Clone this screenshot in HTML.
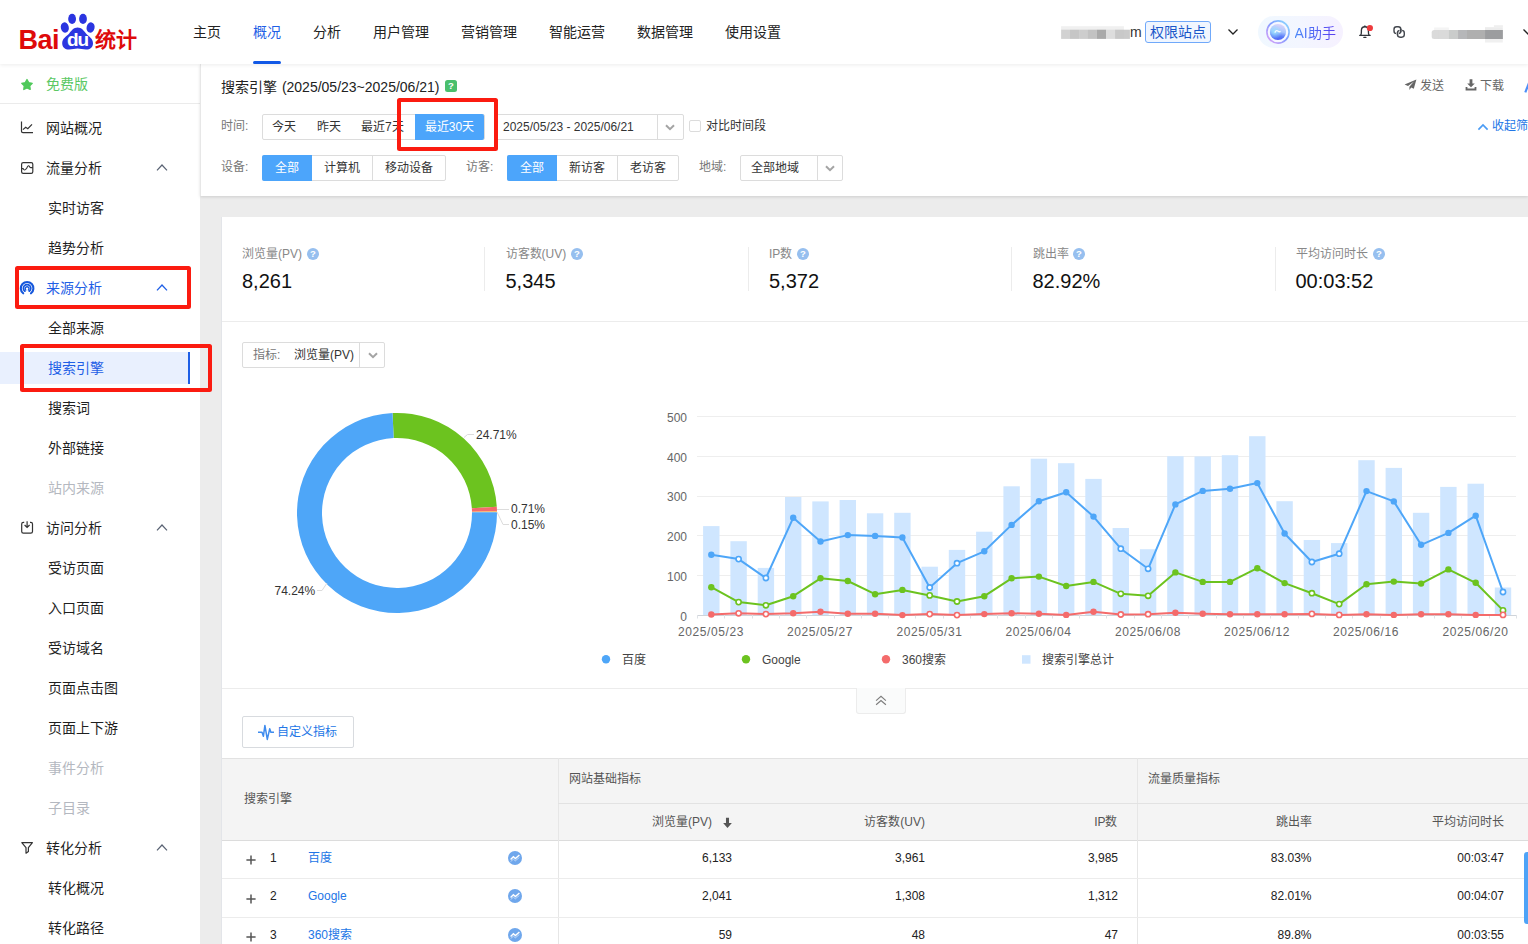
<!DOCTYPE html>
<html lang="zh-CN">
<head>
<meta charset="utf-8">
<title>百度统计 - 搜索引擎</title>
<style>
html,body{margin:0;padding:0}
body{width:1528px;height:944px;overflow:hidden;position:relative;background:#ececec;font-family:"Liberation Sans",sans-serif;color:#333;font-size:12px}
.a{position:absolute;white-space:nowrap}
.t{position:absolute;white-space:nowrap;height:20px;line-height:20px}
.r{text-align:right}
.c{text-align:center}
#hdr{left:0;top:0;width:1528px;height:64px;background:#fff;box-shadow:0 1px 4px rgba(0,0,0,.08);z-index:5}
.nav{font-size:14px;color:#222;top:22px}
#side{left:0;top:64px;width:200px;height:880px;background:#fff}
.m{font-size:14px;color:#1f1f1f;left:46px}
.s{font-size:14px;color:#1f1f1f;left:48px}
.dis{color:#b4b8c0}
#flt{left:200px;top:64px;width:1328px;height:132px;background:#fff;box-shadow:0 1px 3px rgba(0,0,0,.13),inset 1px 0 0 #e7e7e7}
.lab{color:#777;font-size:12px}
.grp{box-sizing:border-box;border:1px solid #dcdcdc;border-radius:2px;background:#fff;height:26px}
.sel{background:#4ca5fb;color:#fff;height:26px;line-height:26px;text-align:center;font-size:12px}
.opt{height:26px;line-height:26px;text-align:center;font-size:12px;color:#333}
#card{left:222px;top:217px;width:1306px;height:727px;background:#fff;box-shadow:-1px 0 0 #e3e5e9}
.sl{font-size:12px;color:#888;margin-top:.5px}
.sv{font-size:20px;color:#111;height:24px;line-height:24px}
.q{width:12px;height:12px;border-radius:6px;background:#96bfef;color:#fff;font-size:9.5px;font-weight:bold;line-height:12.5px;text-align:center}
.dv{width:1px;background:#ececec;top:247px;height:44px}
.ax{font-size:12px;color:#666}
.th{font-size:12px;color:#555}
.td{font-size:12px;color:#222}
.lk{font-size:12px;color:#2276e6}
.redbox{box-sizing:border-box;border:4px solid #fb1b10;border-radius:2.5px;z-index:9}
</style>
</head>
<body>
<!-- ================= HEADER ================= -->
<div id="hdr" class="a">
  <!-- logo -->
  <div class="a" style="left:18.5px;top:25px;height:30px;line-height:30px;font-size:27px;font-weight:bold;color:#de0a0a;letter-spacing:-0.5px">Bai</div>
  <svg class="a" style="left:58px;top:10px" width="40" height="44" viewBox="58 10 40 44">
    <g fill="#2b35e0">
      <ellipse cx="72.1" cy="18.9" rx="3.9" ry="5.1"/>
      <ellipse cx="83" cy="18.9" rx="3.9" ry="5.1"/>
      <ellipse cx="64.8" cy="27.5" rx="4.0" ry="5.2" transform="rotate(-12 64.8 27.5)"/>
      <ellipse cx="90.6" cy="27.5" rx="4.0" ry="5.2" transform="rotate(12 90.6 27.5)"/>
      <path d="M77.6 27.6 C81.5 27.6 83.6 30.6 85.8 33.2 C88.6 36.4 93.2 38.4 93 43.4 C92.8 47.6 89.6 49.6 86 49.4 C83 49.2 80.4 48.4 77.6 48.4 C74.8 48.4 72.2 49.2 69.2 49.4 C65.6 49.6 62.4 47.6 62.2 43.4 C62 38.4 66.6 36.4 69.4 33.2 C71.6 30.6 73.7 27.6 77.6 27.6 Z"/>
    </g>
  </svg>
  <div class="a" style="left:64px;top:29.5px;width:28px;height:20px;line-height:20px;font-size:19px;font-weight:bold;color:#fff;letter-spacing:-1px;text-align:center;text-indent:-1px">du</div>
  <div class="a" style="left:95px;top:26px;height:28px;line-height:28px;font-size:21px;font-weight:bold;color:#de0a0a;letter-spacing:0">统计</div>
  <!-- nav -->
  <div class="t nav" style="left:193px">主页</div>
  <div class="t nav" style="left:253px;color:#1f5fe6">概况</div>
  <div class="t nav" style="left:313px">分析</div>
  <div class="t nav" style="left:373px">用户管理</div>
  <div class="t nav" style="left:461px">营销管理</div>
  <div class="t nav" style="left:549px">智能运营</div>
  <div class="t nav" style="left:637px">数据管理</div>
  <div class="t nav" style="left:725px">使用设置</div>
  <div class="a" style="left:253px;top:60.8px;width:28px;height:3.2px;background:#1259e6;border-radius:1.6px"></div>
  <!-- right side -->
  <svg class="a" style="left:1055px;top:20px" width="80" height="24" viewBox="1055 20 80 24"><rect x="1061.1" y="26.2" width="62.8" height="3.9" fill="#f0f0f0"/><rect x="1061.13" y="29.7" width="8.82" height="9.2" fill="#d2d2d2"/><rect x="1069.90" y="29.7" width="9.21" height="9.2" fill="#c6c6c6"/><rect x="1079.06" y="29.7" width="8.95" height="9.2" fill="#cdcdcd"/><rect x="1087.96" y="29.7" width="8.95" height="9.2" fill="#c2c2c2"/><rect x="1096.86" y="29.7" width="9.21" height="9.2" fill="#a9a9a9"/><rect x="1106.02" y="29.7" width="9.08" height="9.2" fill="#dddddd"/><rect x="1115.05" y="29.7" width="8.95" height="9.2" fill="#c8c8c8"/><rect x="1123.95" y="29.7" width="5.94" height="9.2" fill="#cacaca"/></svg>
  <div class="t" style="left:1130px;top:22px;font-size:14px;color:#333">m</div>
  <div class="a" style="left:1145px;top:21px;width:66px;height:22px;box-sizing:border-box;border:1px solid #70a9fa;border-radius:3px;background:#f0f6ff;color:#1a57c9;font-size:14px;line-height:20px;text-align:center">权限站点</div>
  <svg class="a" style="left:1227px;top:27px" width="12" height="10" viewBox="0 0 12 10"><path d="M1.5 2.5 L6 7 L10.5 2.5" fill="none" stroke="#222" stroke-width="1.3"/></svg>
  <div class="a" style="left:1258px;top:16px;width:85px;height:32px;border-radius:16px;background:linear-gradient(90deg,#f0f8ff 0%,#f3f6ff 50%,#f6f1ff 100%)"></div>
  <svg class="a" style="left:1265px;top:19px" width="26" height="26" viewBox="0 0 26 26">
    <defs>
      <linearGradient id="g1" x1="1" y1="0" x2="0" y2="1"><stop offset="0" stop-color="#8fe2ff"/><stop offset=".45" stop-color="#7f9cff"/><stop offset="1" stop-color="#e3a3f7"/></linearGradient>
      <linearGradient id="g2" x1="0.6" y1="0" x2="0.4" y2="1"><stop offset="0" stop-color="#dcd5fb"/><stop offset=".45" stop-color="#a9c6fd"/><stop offset=".72" stop-color="#5c7ef8"/><stop offset="1" stop-color="#4a5cf5"/></linearGradient>
      <radialGradient id="g3" cx=".28" cy=".5" r=".45"><stop offset="0" stop-color="#9be2ff" stop-opacity=".95"/><stop offset="1" stop-color="#9be2ff" stop-opacity="0"/></radialGradient>
      <filter id="bl" x="-20%" y="-20%" width="140%" height="140%"><feGaussianBlur stdDeviation=".55"/></filter>
    </defs>
    <circle cx="13" cy="13" r="11.1" fill="#f6f8ff" stroke="url(#g1)" stroke-width="1.6"/>
    <g filter="url(#bl)"><circle cx="13" cy="13" r="8.1" fill="url(#g2)"/><circle cx="13" cy="13" r="8.1" fill="url(#g3)"/>
    <path d="M9.8 13.6 Q11.4 10.4 13.2 12.2 Q14.2 13.2 15.6 12.4" fill="none" stroke="#fff" stroke-width="1.3" opacity=".85"/></g>
  </svg>
  <div class="t" style="left:1294.5px;top:22.7px;font-size:14px;background:linear-gradient(90deg,#4a88f8,#5b40f0);-webkit-background-clip:text;background-clip:text;color:transparent;-webkit-text-fill-color:transparent">AI助手</div>
  <div class="t" style="left:1294.5px;top:22px;font-size:14px;color:#5a6ef0;opacity:0">AI助手</div>
  <!-- bell -->
  <svg class="a" style="left:1357px;top:24px" width="18" height="16" viewBox="1357 24 18 16">
    <g fill="none" stroke="#30343a" stroke-width="1.35" stroke-linecap="round" stroke-linejoin="round">
    <path d="M1359.7 35.3 H1370.2"/>
    <path d="M1360.7 35.1 C1361.7 33.6 1361.3 31.6 1361.4 30.2 C1361.5 28 1362.9 26.7 1364.9 26.7 C1366.9 26.7 1368.3 28 1368.4 30.2 C1368.5 31.6 1368.1 33.6 1369.1 35.1"/>
    <path d="M1364.9 25.9 V26.6"/>
    <path d="M1363.9 37.4 H1365.9"/>
    </g>
    <circle cx="1369.9" cy="28" r="3.1" fill="#ee3a3c"/>
  </svg>
  <!-- link -->
  <svg class="a" style="left:1392px;top:25px" width="14" height="14" viewBox="1392 25 14 14">
    <g fill="none" stroke="#43474e" stroke-width="1.4" stroke-linecap="round">
    <rect x="1397.5" y="30.4" width="6.8" height="6.8" rx="2.6"/>
    <path d="M1400.8 29.4 V31.6" stroke="#fff" stroke-width="2.6" stroke-linecap="butt"/>
    <rect x="1394" y="26.8" width="6.8" height="6.8" rx="2.6"/>
    <path d="M1397.5 32.6 V34.6" stroke="#fff" stroke-width="2.6" stroke-linecap="butt"/>
    <path d="M1397.5 32.4 V34.8"/>
    <path d="M1400.8 29.2 V31.8"/>
    </g>
  </svg>
  <svg class="a" style="left:1428px;top:20px" width="80" height="26" viewBox="1428 20 80 26"><rect x="1434.1" y="27.5" width="14.8" height="2.7" fill="#f4f4f4"/><rect x="1485.0" y="27.2" width="17.8" height="3.0" fill="#ececec"/><rect x="1493.9" y="25.2" width="9.0" height="2.1" fill="#efefef"/><rect x="1485.0" y="38.8" width="17.8" height="3.7" fill="#f0f0f0"/><rect x="1431.7" y="30.0" width="17.5" height="9.0" rx="2.5" fill="#dadada"/><rect x="1438.4" y="30.0" width="10.7" height="9.0" fill="#dadada"/><rect x="1448.98" y="30.0" width="9.10" height="9.0" fill="#cacccb"/><rect x="1458.03" y="30.0" width="9.03" height="9.0" fill="#b6b7b9"/><rect x="1467.00" y="30.0" width="18.07" height="9.0" fill="#afafaf"/><rect x="1485.03" y="30.0" width="17.86" height="9.0" fill="#9c9d9f"/></svg>
  <svg class="a" style="left:1522px;top:27px" width="12" height="10" viewBox="0 0 12 10"><path d="M1.5 2.5 L6 7 L10.5 2.5" fill="none" stroke="#222" stroke-width="1.3"/></svg>
</div>

<!-- ================= SIDEBAR ================= -->
<div id="side" class="a"></div>
<svg class="a" style="left:19.9px;top:77.6px" width="14" height="14" viewBox="0 0 14 14"><path d="M7.00 1.50 L8.70 4.65 L12.23 5.30 L9.76 7.90 L10.23 11.45 L7.00 9.90 L3.77 11.45 L4.24 7.90 L1.77 5.30 L5.30 4.65 Z" fill="#50c95b" stroke="#50c95b" stroke-width="1.3" stroke-linejoin="round"/></svg>
<div class="t m" style="top:74px;color:#5bc864">免费版</div>
<div class="a" style="left:0;top:103px;width:200px;height:1px;background:#ebebeb"></div>

<svg class="a" style="left:20px;top:120px" width="15" height="15" viewBox="20 120 15 15"><path d="M21.5 121.4 L21.5 131.2 Q21.5 132.6 22.9 132.6 L33 132.6" fill="none" stroke="#333" stroke-width="1.2"/><path d="M22.9 129.6 L25.7 127.3 L27.8 128.7 L32 124.3" fill="none" stroke="#333" stroke-width="1.2"/></svg>
<div class="t m" style="top:118px">网站概况</div>

<svg class="a" style="left:20px;top:161px" width="15" height="15" viewBox="20 161 15 15"><rect x="21.6" y="162.6" width="11.2" height="10.8" rx="1.6" fill="none" stroke="#333" stroke-width="1.2"/><path d="M21.6 168.6 L23.2 168.6 Q24 170.6 25.4 169.6 Q27 168.2 27.4 166.8 Q28.4 165 29.4 166.4 Q30 167.6 31 167.6 L32.8 167.6" fill="none" stroke="#333" stroke-width="1.1"/></svg>
<div class="t m" style="top:158px">流量分析</div>
<svg class="a" style="left:156px;top:163px" width="12" height="9" viewBox="0 0 12 9"><path d="M1 7.4 L6 2 L11 7.4" fill="none" stroke="#596273" stroke-width="1.2"/></svg>
<div class="t s" style="top:198px">实时访客</div>
<div class="t s" style="top:238px">趋势分析</div>

<svg class="a" style="left:19px;top:280px" width="16" height="16" viewBox="19 280 16 16"><g fill="none" stroke="#1557dc" stroke-linecap="round"><path d="M23.2 293.3 A6.3 6.3 0 1 1 31 293.3" stroke-width="2.1"/><path d="M24.9 291.2 A3.7 3.7 0 1 1 29.3 291.2" stroke-width="1.7"/><path d="M25.8 290 A1.9 1.9 0 1 1 28.4 290" stroke-width="1.4"/></g></svg>
<div class="t m" style="top:278px;color:#1f5fe6">来源分析</div>
<svg class="a" style="left:156px;top:283px" width="12" height="9" viewBox="0 0 12 9"><path d="M1 7.4 L6 2 L11 7.4" fill="none" stroke="#1f5fe6" stroke-width="1.3"/></svg>
<div class="t s" style="top:318px">全部来源</div>
<div class="a" style="left:0;top:352px;width:188px;height:32px;background:#e9f0fe"></div>
<div class="a" style="left:188px;top:352px;width:2px;height:32px;background:#1f5fe6"></div>
<div class="t s" style="top:358px;color:#1f5fe6">搜索引擎</div>
<div class="t s" style="top:398px">搜索词</div>
<div class="t s" style="top:438px">外部链接</div>
<div class="t s dis" style="top:478px">站内来源</div>

<svg class="a" style="left:20px;top:520px" width="15" height="15" viewBox="20 520 15 15"><path d="M24.2 522.3 L23.4 522.3 Q21.7 522.3 21.7 524 L21.7 531.4 Q21.7 533.1 23.4 533.1 L30.8 533.1 Q32.5 533.1 32.5 531.4 L32.5 524 Q32.5 522.3 30.8 522.3 L30 522.3" fill="none" stroke="#333" stroke-width="1.2"/><path d="M27.1 521.2 L27.1 527 M24.6 525 L27.1 527.4 L29.6 525" fill="none" stroke="#333" stroke-width="1.2"/></svg>
<div class="t m" style="top:518px">访问分析</div>
<svg class="a" style="left:156px;top:523px" width="12" height="9" viewBox="0 0 12 9"><path d="M1 7.4 L6 2 L11 7.4" fill="none" stroke="#596273" stroke-width="1.2"/></svg>
<div class="t s" style="top:558px">受访页面</div>
<div class="t s" style="top:598px">入口页面</div>
<div class="t s" style="top:638px">受访域名</div>
<div class="t s" style="top:678px">页面点击图</div>
<div class="t s" style="top:718px">页面上下游</div>
<div class="t s dis" style="top:758px">事件分析</div>
<div class="t s dis" style="top:798px">子目录</div>

<svg class="a" style="left:20px;top:841px" width="15" height="15" viewBox="20 841 15 15"><path d="M21.8 842.6 L32.4 842.6 L28.4 847.6 L28.4 851.4 L26 853.2 L26 847.6 Z" fill="none" stroke="#333" stroke-width="1.2" stroke-linejoin="round"/></svg>
<div class="t m" style="top:838px">转化分析</div>
<svg class="a" style="left:156px;top:843px" width="12" height="9" viewBox="0 0 12 9"><path d="M1 7.4 L6 2 L11 7.4" fill="none" stroke="#596273" stroke-width="1.2"/></svg>
<div class="t s" style="top:878px">转化概况</div>
<div class="t s" style="top:918px">转化路径</div>

<!-- red annotation boxes -->
<div class="a redbox" style="left:15px;top:266px;width:176px;height:43px"></div>
<div class="a redbox" style="left:20px;top:344px;width:192px;height:48px"></div>
<div class="a redbox" style="left:397px;top:98px;width:101px;height:53px"></div>
<!-- ================= FILTER PANEL ================= -->
<div id="flt" class="a"></div>
<div class="t" style="left:221px;top:76.5px;font-size:14px;color:#222;word-spacing:1px">搜索引擎 (2025/05/23~2025/06/21)</div>
<div class="a" style="left:445px;top:80px;width:12px;height:12px;border-radius:2.5px;background:#4abf6d;color:#fff;font-size:9.5px;font-weight:bold;line-height:12.5px;text-align:center">?</div>

<svg class="a" style="left:1404px;top:79px" width="13" height="12" viewBox="0 0 13 12"><path d="M12.4 0.4 L0.6 5.6 L4 7 L10 2.6 L5.4 7.8 L5.4 11 L7.2 8.6 L9.8 9.8 Z" fill="#666"/></svg>
<div class="t" style="left:1420px;top:76px;color:#666">发送</div>
<svg class="a" style="left:1465px;top:79px" width="12" height="12" viewBox="0 0 12 12"><path d="M4.6 0.2 H7.4 V4.4 H9.8 L6 8.2 L2.2 4.4 H4.6 Z" fill="#666"/><path d="M0.6 8 V11.6 H11.4 V8 H9.6 V9.4 H2.4 V8 Z" fill="#666"/></svg>
<div class="t" style="left:1480px;top:76px;color:#666">下载</div>
<svg class="a" style="left:1520px;top:78px" width="10" height="18" viewBox="1520 78 10 18"><path d="M1525.3 92.4 L1529.4 82" fill="none" stroke="#4d8ff8" stroke-width="2.2"/></svg>

<div class="t lab" style="left:221px;top:116px">时间:</div>
<div class="a grp" style="left:262px;top:114px;width:223px"></div>
<div class="a opt" style="left:272px;top:114px">今天</div>
<div class="a opt" style="left:317px;top:114px">昨天</div>
<div class="a opt" style="left:361px;top:114px">最近7天</div>
<div class="a sel" style="left:415px;top:114px;width:69px;border-radius:0 2px 2px 0">最近30天</div>
<div class="a grp" style="left:495px;top:114px;width:189px"></div>
<div class="a opt" style="left:503px;top:114px">2025/05/23 - 2025/06/21</div>
<div class="a" style="left:657px;top:114px;width:1px;height:26px;background:#dcdcdc"></div>
<svg class="a" style="left:664px;top:123px" width="12" height="9" viewBox="0 0 12 9"><path d="M2 2.2 L6 6.2 L10 2.2" fill="none" stroke="#a4a4a4" stroke-width="2"/></svg>
<div class="a" style="left:689px;top:120px;width:12px;height:12px;box-sizing:border-box;border:1px solid #dcdcdc;border-radius:2px;background:#fff"></div>
<div class="t" style="left:706px;top:116px;color:#333">对比时间段</div>
<svg class="a" style="left:1477px;top:123px" width="12" height="8" viewBox="0 0 12 8"><path d="M1.4 6.6 L6 2 L10.6 6.6" fill="none" stroke="#4b9cf5" stroke-width="1.7"/></svg>
<div class="t" style="left:1492px;top:116px;color:#2276e6">收起筛选</div>

<div class="t lab" style="left:221px;top:157px">设备:</div>
<div class="a grp" style="left:262px;top:155px;width:184px"></div>
<div class="a sel" style="left:262px;top:155px;width:50px;border-radius:2px 0 0 2px">全部</div>
<div class="a opt" style="left:312px;top:155px;width:60px">计算机</div>
<div class="a" style="left:372px;top:155px;width:1px;height:26px;background:#dcdcdc"></div>
<div class="a opt" style="left:373px;top:155px;width:72px">移动设备</div>
<div class="t lab" style="left:466px;top:157px">访客:</div>
<div class="a grp" style="left:507px;top:155px;width:172px"></div>
<div class="a sel" style="left:507px;top:155px;width:50px;border-radius:2px 0 0 2px">全部</div>
<div class="a opt" style="left:557px;top:155px;width:60px">新访客</div>
<div class="a" style="left:617px;top:155px;width:1px;height:26px;background:#dcdcdc"></div>
<div class="a opt" style="left:618px;top:155px;width:60px">老访客</div>
<div class="t lab" style="left:699px;top:157px">地域:</div>
<div class="a grp" style="left:740px;top:155px;width:103px"></div>
<div class="a opt" style="left:751px;top:155px">全部地域</div>
<div class="a" style="left:817px;top:155px;width:1px;height:26px;background:#dcdcdc"></div>
<svg class="a" style="left:824px;top:164px" width="12" height="9" viewBox="0 0 12 9"><path d="M2 2.2 L6 6.2 L10 2.2" fill="none" stroke="#a4a4a4" stroke-width="2"/></svg>

<!-- ================= MAIN CARD ================= -->
<div id="card" class="a"></div>
<div class="t sl" style="left:242px;top:243px">浏览量(PV)</div><div class="a q" style="left:307px;top:248px">?</div>
<div class="t sv" style="left:242px;top:269px">8,261</div>
<div class="a dv" style="left:484px"></div>
<div class="t sl" style="left:505.5px;top:243px">访客数(UV)</div><div class="a q" style="left:571px;top:248px">?</div>
<div class="t sv" style="left:505.5px;top:269px">5,345</div>
<div class="a dv" style="left:748px"></div>
<div class="t sl" style="left:769px;top:243px">IP数</div><div class="a q" style="left:797px;top:248px">?</div>
<div class="t sv" style="left:769px;top:269px">5,372</div>
<div class="a dv" style="left:1011px"></div>
<div class="t sl" style="left:1032.5px;top:243px">跳出率</div><div class="a q" style="left:1073px;top:248px">?</div>
<div class="t sv" style="left:1032.5px;top:269px">82.92%</div>
<div class="a dv" style="left:1275px"></div>
<div class="t sl" style="left:1295.5px;top:243px">平均访问时长</div><div class="a q" style="left:1373px;top:248px">?</div>
<div class="t sv" style="left:1295.5px;top:269px">00:03:52</div>
<div class="a" style="left:222px;top:321px;width:1306px;height:1px;background:#ececec"></div>

<div class="a grp" style="left:242px;top:342px;width:143px"></div>
<div class="a opt" style="left:253px;top:342px;color:#777">指标:</div>
<div class="a opt" style="left:294px;top:342px">浏览量(PV)</div>
<div class="a" style="left:359px;top:342px;width:1px;height:26px;background:#dcdcdc"></div>
<svg class="a" style="left:366.5px;top:351px" width="12" height="9" viewBox="0 0 12 9"><path d="M2 2.2 L6 6.2 L10 2.2" fill="none" stroke="#a4a4a4" stroke-width="2"/></svg>

<!-- chart texts -->
<div class="t" style="left:476px;top:424.5px;color:#333">24.71%</div>
<div class="t" style="left:511px;top:498.5px;color:#333">0.71%</div>
<div class="t" style="left:511px;top:514.5px;color:#333">0.15%</div>
<div class="t" style="left:274.5px;top:580.5px;color:#333">74.24%</div>

<div class="t ax r" style="left:647px;width:40px;top:407.5px">500</div>
<div class="t ax r" style="left:647px;width:40px;top:447.5px">400</div>
<div class="t ax r" style="left:647px;width:40px;top:487px">300</div>
<div class="t ax r" style="left:647px;width:40px;top:527px">200</div>
<div class="t ax r" style="left:647px;width:40px;top:566.5px">100</div>
<div class="t ax r" style="left:647px;width:40px;top:606.5px">0</div>
<div class="t ax c" style="left:661px;width:100px;top:621.8px;letter-spacing:.6px">2025/05/23</div>
<div class="t ax c" style="left:770px;width:100px;top:621.8px;letter-spacing:.6px">2025/05/27</div>
<div class="t ax c" style="left:879.5px;width:100px;top:621.8px;letter-spacing:.6px">2025/05/31</div>
<div class="t ax c" style="left:988.5px;width:100px;top:621.8px;letter-spacing:.6px">2025/06/04</div>
<div class="t ax c" style="left:1098px;width:100px;top:621.8px;letter-spacing:.6px">2025/06/08</div>
<div class="t ax c" style="left:1207px;width:100px;top:621.8px;letter-spacing:.6px">2025/06/12</div>
<div class="t ax c" style="left:1316px;width:100px;top:621.8px;letter-spacing:.6px">2025/06/16</div>
<div class="t ax c" style="left:1425.5px;width:100px;top:621.8px;letter-spacing:.6px">2025/06/20</div>
<div class="t" style="left:622px;top:649.6px;color:#444">百度</div>
<div class="t" style="left:762px;top:649.6px;color:#444">Google</div>
<div class="t" style="left:902px;top:649.6px;color:#444">360搜索</div>
<div class="t" style="left:1042px;top:649.6px;color:#444">搜索引擎总计</div>

<div class="a" style="left:222px;top:688px;width:1306px;height:1px;background:#ececec"></div>
<div class="a" style="left:856px;top:688px;width:50px;height:26px;box-sizing:border-box;background:#fafbfb;border:1px solid #ececec;border-top:none;border-radius:0 0 3px 3px"></div>
<svg class="a" style="left:874px;top:694px" width="14" height="14" viewBox="0 0 14 14"><path d="M2.1 6.6 L7 2.3 L11.9 6.6 M2.1 10.8 L7 6.5 L11.9 10.8" fill="none" stroke="#7d7d7d" stroke-width="1.15"/></svg>

<div class="a" style="left:242px;top:716px;width:112px;height:32px;box-sizing:border-box;border:1px solid #d8dbdf;border-radius:2px;background:#fff"></div>
<svg class="a" style="left:256px;top:722px" width="20" height="20" viewBox="256 722 20 20"><path d="M258 732.3 H262 L263.4 736.2 L264.9 725.4 L267.3 739.4 L269.7 728.8 L270.9 732.3 H274" fill="none" stroke="#3f8cee" stroke-width="1.5" stroke-linejoin="round"/></svg>
<div class="t" style="left:277px;top:722px;color:#2276e6">自定义指标</div>

<!-- ================= TABLE ================= -->
<div class="a" style="left:222px;top:758px;width:1306px;height:83px;background:#f4f4f4;border-top:1px solid #e2e2e2;border-bottom:1px solid #dcdcdc;box-sizing:border-box"></div>
<div class="a" style="left:558px;top:758px;width:1px;height:186px;background:#e6e6e6"></div>
<div class="a" style="left:1137px;top:758px;width:1px;height:186px;background:#e6e6e6"></div>
<div class="a" style="left:558px;top:803px;width:970px;height:1px;background:#e2e2e2"></div>
<div class="t th" style="left:244px;top:788.7px">搜索引擎</div>
<div class="t th" style="left:569px;top:769px">网站基础指标</div>
<div class="t th" style="left:1148px;top:769px">流量质量指标</div>
<div class="t th r" style="left:612px;width:100px;top:812px">浏览量(PV)</div>
<svg class="a" style="left:722px;top:816.5px" width="11" height="12" viewBox="0 0 10 11"><path d="M3.6 0.6 H6.4 V5.4 H9 L5 10 L1 5.4 H3.6 Z" fill="#555"/></svg>
<div class="t th r" style="left:825px;width:100px;top:812px">访客数(UV)</div>
<div class="t th r" style="left:1017.5px;width:100px;top:812px">IP数</div>
<div class="t th r" style="left:1211.5px;width:100px;top:812px">跳出率</div>
<div class="t th r" style="left:1403.5px;width:100px;top:812px">平均访问时长</div>

<div class="a" style="left:222px;top:878px;width:1306px;height:1px;background:#ececec"></div>
<div class="a" style="left:222px;top:917px;width:1306px;height:1px;background:#ececec"></div>
<svg class="a" style="left:246px;top:855.0px" width="10" height="10" viewBox="0 0 10 10"><path d="M5 0.4 V9.6 M0.4 5 H9.6" stroke="#555" stroke-width="1.5"/></svg>
<div class="t td" style="left:270px;top:847.5px">1</div>
<div class="t lk" style="left:308px;top:847.5px">百度</div>
<svg class="a" style="left:507.5px;top:850.5px" width="14" height="14" viewBox="0 0 14 14"><circle cx="7" cy="7" r="7" fill="#6fa7ec"/><path d="M2.6 8.6 L5.4 5.8 L7.4 7.6 L11.4 4" fill="none" stroke="#fff" stroke-width="1.4"/><path d="M2.6 10.6 L5.4 8.2 L7.4 9.8 L11.4 6.4" fill="none" stroke="#fff" stroke-width="0.8" opacity=".7"/></svg>
<div class="t td r" style="left:632.0px;width:100px;top:847.5px">6,133</div>
<div class="t td r" style="left:825.0px;width:100px;top:847.5px">3,961</div>
<div class="t td r" style="left:1018.0px;width:100px;top:847.5px">3,985</div>
<div class="t td r" style="left:1211.5px;width:100px;top:847.5px">83.03%</div>
<div class="t td r" style="left:1404.0px;width:100px;top:847.5px">00:03:47</div>
<svg class="a" style="left:246px;top:893.5px" width="10" height="10" viewBox="0 0 10 10"><path d="M5 0.4 V9.6 M0.4 5 H9.6" stroke="#555" stroke-width="1.5"/></svg>
<div class="t td" style="left:270px;top:886px">2</div>
<div class="t lk" style="left:308px;top:886px">Google</div>
<svg class="a" style="left:507.5px;top:889px" width="14" height="14" viewBox="0 0 14 14"><circle cx="7" cy="7" r="7" fill="#6fa7ec"/><path d="M2.6 8.6 L5.4 5.8 L7.4 7.6 L11.4 4" fill="none" stroke="#fff" stroke-width="1.4"/><path d="M2.6 10.6 L5.4 8.2 L7.4 9.8 L11.4 6.4" fill="none" stroke="#fff" stroke-width="0.8" opacity=".7"/></svg>
<div class="t td r" style="left:632.0px;width:100px;top:886px">2,041</div>
<div class="t td r" style="left:825.0px;width:100px;top:886px">1,308</div>
<div class="t td r" style="left:1018.0px;width:100px;top:886px">1,312</div>
<div class="t td r" style="left:1211.5px;width:100px;top:886px">82.01%</div>
<div class="t td r" style="left:1404.0px;width:100px;top:886px">00:04:07</div>
<svg class="a" style="left:246px;top:932.0px" width="10" height="10" viewBox="0 0 10 10"><path d="M5 0.4 V9.6 M0.4 5 H9.6" stroke="#555" stroke-width="1.5"/></svg>
<div class="t td" style="left:270px;top:924.5px">3</div>
<div class="t lk" style="left:308px;top:924.5px">360搜索</div>
<svg class="a" style="left:507.5px;top:927.5px" width="14" height="14" viewBox="0 0 14 14"><circle cx="7" cy="7" r="7" fill="#6fa7ec"/><path d="M2.6 8.6 L5.4 5.8 L7.4 7.6 L11.4 4" fill="none" stroke="#fff" stroke-width="1.4"/><path d="M2.6 10.6 L5.4 8.2 L7.4 9.8 L11.4 6.4" fill="none" stroke="#fff" stroke-width="0.8" opacity=".7"/></svg>
<div class="t td r" style="left:632.0px;width:100px;top:924.5px">59</div>
<div class="t td r" style="left:825.0px;width:100px;top:924.5px">48</div>
<div class="t td r" style="left:1018.0px;width:100px;top:924.5px">47</div>
<div class="t td r" style="left:1211.5px;width:100px;top:924.5px">89.8%</div>
<div class="t td r" style="left:1404.0px;width:100px;top:924.5px">00:03:55</div>
<div class="a" style="left:1524px;top:852px;width:6px;height:72px;background:#4da3f7;border-radius:3px 0 0 3px"></div>
<svg id="chart" width="1528" height="944" viewBox="0 0 1528 944" style="position:absolute;left:0;top:0;pointer-events:none">
<line x1="697" y1="575.5" x2="1516" y2="575.5" stroke="#eeeeee" stroke-width="1"/>
<line x1="697" y1="535.5" x2="1516" y2="535.5" stroke="#eeeeee" stroke-width="1"/>
<line x1="697" y1="496.5" x2="1516" y2="496.5" stroke="#eeeeee" stroke-width="1"/>
<line x1="697" y1="456.5" x2="1516" y2="456.5" stroke="#eeeeee" stroke-width="1"/>
<line x1="697" y1="416.5" x2="1516" y2="416.5" stroke="#eeeeee" stroke-width="1"/>
<rect x="703.1" y="526.1" width="16.4" height="89.6" fill="#cfe6ff"/>
<rect x="730.4" y="541.2" width="16.4" height="74.5" fill="#cfe6ff"/>
<rect x="757.7" y="567.9" width="16.4" height="47.8" fill="#cfe6ff"/>
<rect x="785.0" y="497.0" width="16.4" height="118.7" fill="#cfe6ff"/>
<rect x="812.3" y="501.4" width="16.4" height="114.3" fill="#cfe6ff"/>
<rect x="839.6" y="500.0" width="16.4" height="115.7" fill="#cfe6ff"/>
<rect x="866.9" y="513.3" width="16.4" height="102.4" fill="#cfe6ff"/>
<rect x="894.2" y="512.8" width="16.4" height="102.9" fill="#cfe6ff"/>
<rect x="921.5" y="566.7" width="16.4" height="49.0" fill="#cfe6ff"/>
<rect x="948.8" y="549.9" width="16.4" height="65.8" fill="#cfe6ff"/>
<rect x="976.1" y="531.7" width="16.4" height="84.0" fill="#cfe6ff"/>
<rect x="1003.4" y="486.3" width="16.4" height="129.4" fill="#cfe6ff"/>
<rect x="1030.7" y="458.7" width="16.4" height="157.0" fill="#cfe6ff"/>
<rect x="1058.0" y="463.2" width="16.4" height="152.5" fill="#cfe6ff"/>
<rect x="1085.3" y="478.9" width="16.4" height="136.8" fill="#cfe6ff"/>
<rect x="1112.6" y="528.0" width="16.4" height="87.7" fill="#cfe6ff"/>
<rect x="1139.9" y="549.2" width="16.4" height="66.5" fill="#cfe6ff"/>
<rect x="1167.2" y="456.2" width="16.4" height="159.5" fill="#cfe6ff"/>
<rect x="1194.5" y="456.4" width="16.4" height="159.3" fill="#cfe6ff"/>
<rect x="1221.8" y="455.2" width="16.4" height="160.5" fill="#cfe6ff"/>
<rect x="1249.1" y="436.2" width="16.4" height="179.5" fill="#cfe6ff"/>
<rect x="1276.4" y="501.2" width="16.4" height="114.5" fill="#cfe6ff"/>
<rect x="1303.7" y="540.0" width="16.4" height="75.7" fill="#cfe6ff"/>
<rect x="1331.0" y="543.1" width="16.4" height="72.6" fill="#cfe6ff"/>
<rect x="1358.3" y="460.2" width="16.4" height="155.5" fill="#cfe6ff"/>
<rect x="1385.6" y="467.9" width="16.4" height="147.8" fill="#cfe6ff"/>
<rect x="1412.9" y="512.8" width="16.4" height="102.9" fill="#cfe6ff"/>
<rect x="1440.2" y="486.9" width="16.4" height="128.8" fill="#cfe6ff"/>
<rect x="1467.5" y="483.7" width="16.4" height="132.0" fill="#cfe6ff"/>
<rect x="1494.8" y="587.5" width="16.4" height="28.2" fill="#cfe6ff"/>
<line x1="697" y1="615.5" x2="1516" y2="615.5" stroke="#cfd4da" stroke-width="1"/>
<line x1="697.5" y1="615" x2="697.5" y2="618.5" stroke="#dfe2e6" stroke-width="1"/>
<line x1="724.5" y1="615" x2="724.5" y2="618.5" stroke="#dfe2e6" stroke-width="1"/>
<line x1="752.5" y1="615" x2="752.5" y2="618.5" stroke="#dfe2e6" stroke-width="1"/>
<line x1="779.5" y1="615" x2="779.5" y2="618.5" stroke="#dfe2e6" stroke-width="1"/>
<line x1="806.5" y1="615" x2="806.5" y2="618.5" stroke="#dfe2e6" stroke-width="1"/>
<line x1="834.5" y1="615" x2="834.5" y2="618.5" stroke="#dfe2e6" stroke-width="1"/>
<line x1="861.5" y1="615" x2="861.5" y2="618.5" stroke="#dfe2e6" stroke-width="1"/>
<line x1="888.5" y1="615" x2="888.5" y2="618.5" stroke="#dfe2e6" stroke-width="1"/>
<line x1="915.5" y1="615" x2="915.5" y2="618.5" stroke="#dfe2e6" stroke-width="1"/>
<line x1="943.5" y1="615" x2="943.5" y2="618.5" stroke="#dfe2e6" stroke-width="1"/>
<line x1="970.5" y1="615" x2="970.5" y2="618.5" stroke="#dfe2e6" stroke-width="1"/>
<line x1="997.5" y1="615" x2="997.5" y2="618.5" stroke="#dfe2e6" stroke-width="1"/>
<line x1="1025.5" y1="615" x2="1025.5" y2="618.5" stroke="#dfe2e6" stroke-width="1"/>
<line x1="1052.5" y1="615" x2="1052.5" y2="618.5" stroke="#dfe2e6" stroke-width="1"/>
<line x1="1079.5" y1="615" x2="1079.5" y2="618.5" stroke="#dfe2e6" stroke-width="1"/>
<line x1="1106.5" y1="615" x2="1106.5" y2="618.5" stroke="#dfe2e6" stroke-width="1"/>
<line x1="1134.5" y1="615" x2="1134.5" y2="618.5" stroke="#dfe2e6" stroke-width="1"/>
<line x1="1161.5" y1="615" x2="1161.5" y2="618.5" stroke="#dfe2e6" stroke-width="1"/>
<line x1="1188.5" y1="615" x2="1188.5" y2="618.5" stroke="#dfe2e6" stroke-width="1"/>
<line x1="1216.5" y1="615" x2="1216.5" y2="618.5" stroke="#dfe2e6" stroke-width="1"/>
<line x1="1243.5" y1="615" x2="1243.5" y2="618.5" stroke="#dfe2e6" stroke-width="1"/>
<line x1="1270.5" y1="615" x2="1270.5" y2="618.5" stroke="#dfe2e6" stroke-width="1"/>
<line x1="1298.5" y1="615" x2="1298.5" y2="618.5" stroke="#dfe2e6" stroke-width="1"/>
<line x1="1325.5" y1="615" x2="1325.5" y2="618.5" stroke="#dfe2e6" stroke-width="1"/>
<line x1="1352.5" y1="615" x2="1352.5" y2="618.5" stroke="#dfe2e6" stroke-width="1"/>
<line x1="1380.5" y1="615" x2="1380.5" y2="618.5" stroke="#dfe2e6" stroke-width="1"/>
<line x1="1407.5" y1="615" x2="1407.5" y2="618.5" stroke="#dfe2e6" stroke-width="1"/>
<line x1="1434.5" y1="615" x2="1434.5" y2="618.5" stroke="#dfe2e6" stroke-width="1"/>
<line x1="1461.5" y1="615" x2="1461.5" y2="618.5" stroke="#dfe2e6" stroke-width="1"/>
<line x1="1489.5" y1="615" x2="1489.5" y2="618.5" stroke="#dfe2e6" stroke-width="1"/>
<line x1="1516.5" y1="615" x2="1516.5" y2="618.5" stroke="#dfe2e6" stroke-width="1"/>
<polyline points="711.3,554.7 738.6,559.1 765.9,578.0 793.2,517.8 820.5,541.5 847.8,535.1 875.1,535.9 902.4,537.5 929.7,587.5 957.0,563.2 984.3,551.3 1011.6,524.9 1038.9,501.2 1066.2,492.3 1093.5,516.6 1120.8,548.7 1148.1,568.8 1175.4,504.4 1202.7,490.9 1230.0,488.7 1257.3,483.1 1284.6,533.5 1311.9,562.0 1339.2,553.7 1366.5,491.1 1393.8,501.4 1421.1,544.8 1448.4,532.9 1475.7,515.7 1503.0,592.0" fill="none" stroke="#4ea6f8" stroke-width="2" stroke-linejoin="round"/>
<circle cx="711.3" cy="554.7" r="3.2" fill="#4ea6f8"/>
<circle cx="738.6" cy="559.1" r="2.6" fill="#fff" stroke="#4ea6f8" stroke-width="1.6"/>
<circle cx="765.9" cy="578.0" r="2.6" fill="#fff" stroke="#4ea6f8" stroke-width="1.6"/>
<circle cx="793.2" cy="517.8" r="3.2" fill="#4ea6f8"/>
<circle cx="820.5" cy="541.5" r="3.2" fill="#4ea6f8"/>
<circle cx="847.8" cy="535.1" r="3.2" fill="#4ea6f8"/>
<circle cx="875.1" cy="535.9" r="3.2" fill="#4ea6f8"/>
<circle cx="902.4" cy="537.5" r="3.2" fill="#4ea6f8"/>
<circle cx="929.7" cy="587.5" r="2.6" fill="#fff" stroke="#4ea6f8" stroke-width="1.6"/>
<circle cx="957.0" cy="563.2" r="2.6" fill="#fff" stroke="#4ea6f8" stroke-width="1.6"/>
<circle cx="984.3" cy="551.3" r="3.2" fill="#4ea6f8"/>
<circle cx="1011.6" cy="524.9" r="3.2" fill="#4ea6f8"/>
<circle cx="1038.9" cy="501.2" r="3.2" fill="#4ea6f8"/>
<circle cx="1066.2" cy="492.3" r="3.2" fill="#4ea6f8"/>
<circle cx="1093.5" cy="516.6" r="3.2" fill="#4ea6f8"/>
<circle cx="1120.8" cy="548.7" r="2.6" fill="#fff" stroke="#4ea6f8" stroke-width="1.6"/>
<circle cx="1148.1" cy="568.8" r="2.6" fill="#fff" stroke="#4ea6f8" stroke-width="1.6"/>
<circle cx="1175.4" cy="504.4" r="3.2" fill="#4ea6f8"/>
<circle cx="1202.7" cy="490.9" r="3.2" fill="#4ea6f8"/>
<circle cx="1230.0" cy="488.7" r="3.2" fill="#4ea6f8"/>
<circle cx="1257.3" cy="483.1" r="3.2" fill="#4ea6f8"/>
<circle cx="1284.6" cy="533.5" r="3.2" fill="#4ea6f8"/>
<circle cx="1311.9" cy="562.0" r="2.6" fill="#fff" stroke="#4ea6f8" stroke-width="1.6"/>
<circle cx="1339.2" cy="553.7" r="2.6" fill="#fff" stroke="#4ea6f8" stroke-width="1.6"/>
<circle cx="1366.5" cy="491.1" r="3.2" fill="#4ea6f8"/>
<circle cx="1393.8" cy="501.4" r="3.2" fill="#4ea6f8"/>
<circle cx="1421.1" cy="544.8" r="3.2" fill="#4ea6f8"/>
<circle cx="1448.4" cy="532.9" r="3.2" fill="#4ea6f8"/>
<circle cx="1475.7" cy="515.7" r="3.2" fill="#4ea6f8"/>
<circle cx="1503.0" cy="592.0" r="2.6" fill="#fff" stroke="#4ea6f8" stroke-width="1.6"/>
<polyline points="711.3,587.2 738.6,602.1 765.9,605.3 793.2,596.2 820.5,578.3 847.8,581.0 875.1,594.2 902.4,589.9 929.7,595.4 957.0,601.5 984.3,596.2 1011.6,578.3 1038.9,576.6 1066.2,586.0 1093.5,581.9 1120.8,593.8 1148.1,595.8 1175.4,572.4 1202.7,581.9 1230.0,581.9 1257.3,568.2 1284.6,583.1 1311.9,593.2 1339.2,604.1 1366.5,584.2 1393.8,581.6 1421.1,583.6 1448.4,569.4 1475.7,582.8 1503.0,610.4" fill="none" stroke="#6cc31f" stroke-width="2" stroke-linejoin="round"/>
<circle cx="711.3" cy="587.2" r="3.2" fill="#6cc31f"/>
<circle cx="738.6" cy="602.1" r="2.6" fill="#fff" stroke="#6cc31f" stroke-width="1.6"/>
<circle cx="765.9" cy="605.3" r="2.6" fill="#fff" stroke="#6cc31f" stroke-width="1.6"/>
<circle cx="793.2" cy="596.2" r="3.2" fill="#6cc31f"/>
<circle cx="820.5" cy="578.3" r="3.2" fill="#6cc31f"/>
<circle cx="847.8" cy="581.0" r="3.2" fill="#6cc31f"/>
<circle cx="875.1" cy="594.2" r="3.2" fill="#6cc31f"/>
<circle cx="902.4" cy="589.9" r="3.2" fill="#6cc31f"/>
<circle cx="929.7" cy="595.4" r="2.6" fill="#fff" stroke="#6cc31f" stroke-width="1.6"/>
<circle cx="957.0" cy="601.5" r="2.6" fill="#fff" stroke="#6cc31f" stroke-width="1.6"/>
<circle cx="984.3" cy="596.2" r="3.2" fill="#6cc31f"/>
<circle cx="1011.6" cy="578.3" r="3.2" fill="#6cc31f"/>
<circle cx="1038.9" cy="576.6" r="3.2" fill="#6cc31f"/>
<circle cx="1066.2" cy="586.0" r="3.2" fill="#6cc31f"/>
<circle cx="1093.5" cy="581.9" r="3.2" fill="#6cc31f"/>
<circle cx="1120.8" cy="593.8" r="2.6" fill="#fff" stroke="#6cc31f" stroke-width="1.6"/>
<circle cx="1148.1" cy="595.8" r="2.6" fill="#fff" stroke="#6cc31f" stroke-width="1.6"/>
<circle cx="1175.4" cy="572.4" r="3.2" fill="#6cc31f"/>
<circle cx="1202.7" cy="581.9" r="3.2" fill="#6cc31f"/>
<circle cx="1230.0" cy="581.9" r="3.2" fill="#6cc31f"/>
<circle cx="1257.3" cy="568.2" r="3.2" fill="#6cc31f"/>
<circle cx="1284.6" cy="583.1" r="3.2" fill="#6cc31f"/>
<circle cx="1311.9" cy="593.2" r="2.6" fill="#fff" stroke="#6cc31f" stroke-width="1.6"/>
<circle cx="1339.2" cy="604.1" r="2.6" fill="#fff" stroke="#6cc31f" stroke-width="1.6"/>
<circle cx="1366.5" cy="584.2" r="3.2" fill="#6cc31f"/>
<circle cx="1393.8" cy="581.6" r="3.2" fill="#6cc31f"/>
<circle cx="1421.1" cy="583.6" r="3.2" fill="#6cc31f"/>
<circle cx="1448.4" cy="569.4" r="3.2" fill="#6cc31f"/>
<circle cx="1475.7" cy="582.8" r="3.2" fill="#6cc31f"/>
<circle cx="1503.0" cy="610.4" r="2.6" fill="#fff" stroke="#6cc31f" stroke-width="1.6"/>
<polyline points="711.3,614.5 738.6,613.3 765.9,614.1 793.2,613.3 820.5,611.7 847.8,613.7 875.1,613.7 902.4,615.1 929.7,614.1 957.0,615.1 984.3,614.1 1011.6,613.3 1038.9,613.7 1066.2,614.9 1093.5,611.8 1120.8,614.5 1148.1,614.2 1175.4,612.7 1202.7,613.7 1230.0,614.2 1257.3,614.2 1284.6,614.2 1311.9,613.9 1339.2,614.9 1366.5,614.2 1393.8,614.9 1421.1,614.2 1448.4,614.2 1475.7,614.9 1503.0,614.9" fill="none" stroke="#f46b6b" stroke-width="2" stroke-linejoin="round"/>
<circle cx="711.3" cy="614.5" r="3.2" fill="#f46b6b"/>
<circle cx="738.6" cy="613.3" r="2.6" fill="#fff" stroke="#f46b6b" stroke-width="1.6"/>
<circle cx="765.9" cy="614.1" r="2.6" fill="#fff" stroke="#f46b6b" stroke-width="1.6"/>
<circle cx="793.2" cy="613.3" r="3.2" fill="#f46b6b"/>
<circle cx="820.5" cy="611.7" r="3.2" fill="#f46b6b"/>
<circle cx="847.8" cy="613.7" r="3.2" fill="#f46b6b"/>
<circle cx="875.1" cy="613.7" r="3.2" fill="#f46b6b"/>
<circle cx="902.4" cy="615.1" r="3.2" fill="#f46b6b"/>
<circle cx="929.7" cy="614.1" r="2.6" fill="#fff" stroke="#f46b6b" stroke-width="1.6"/>
<circle cx="957.0" cy="615.1" r="2.6" fill="#fff" stroke="#f46b6b" stroke-width="1.6"/>
<circle cx="984.3" cy="614.1" r="3.2" fill="#f46b6b"/>
<circle cx="1011.6" cy="613.3" r="3.2" fill="#f46b6b"/>
<circle cx="1038.9" cy="613.7" r="3.2" fill="#f46b6b"/>
<circle cx="1066.2" cy="614.9" r="3.2" fill="#f46b6b"/>
<circle cx="1093.5" cy="611.8" r="3.2" fill="#f46b6b"/>
<circle cx="1120.8" cy="614.5" r="2.6" fill="#fff" stroke="#f46b6b" stroke-width="1.6"/>
<circle cx="1148.1" cy="614.2" r="2.6" fill="#fff" stroke="#f46b6b" stroke-width="1.6"/>
<circle cx="1175.4" cy="612.7" r="3.2" fill="#f46b6b"/>
<circle cx="1202.7" cy="613.7" r="3.2" fill="#f46b6b"/>
<circle cx="1230.0" cy="614.2" r="3.2" fill="#f46b6b"/>
<circle cx="1257.3" cy="614.2" r="3.2" fill="#f46b6b"/>
<circle cx="1284.6" cy="614.2" r="3.2" fill="#f46b6b"/>
<circle cx="1311.9" cy="613.9" r="2.6" fill="#fff" stroke="#f46b6b" stroke-width="1.6"/>
<circle cx="1339.2" cy="614.9" r="2.6" fill="#fff" stroke="#f46b6b" stroke-width="1.6"/>
<circle cx="1366.5" cy="614.2" r="3.2" fill="#f46b6b"/>
<circle cx="1393.8" cy="614.9" r="3.2" fill="#f46b6b"/>
<circle cx="1421.1" cy="614.2" r="3.2" fill="#f46b6b"/>
<circle cx="1448.4" cy="614.2" r="3.2" fill="#f46b6b"/>
<circle cx="1475.7" cy="614.9" r="3.2" fill="#f46b6b"/>
<circle cx="1503.0" cy="614.9" r="2.6" fill="#fff" stroke="#f46b6b" stroke-width="1.6"/>
<path d="M392.55,413.10 A100,100 0 0 1 496.80,506.73 L471.85,508.30 A75,75 0 0 0 393.66,438.07 Z" fill="#6cc31f"/>
<path d="M496.80,506.73 A100,100 0 0 1 496.98,511.19 L471.99,511.64 A75,75 0 0 0 471.85,508.30 Z" fill="#f46b6b"/>
<path d="M496.98,511.19 A100,100 0 0 1 497.00,512.13 L472.00,512.35 A75,75 0 0 0 471.99,511.64 Z" fill="#f5b64a"/>
<path d="M497.00,512.13 A100,100 0 1 1 392.55,413.10 L393.66,438.07 A75,75 0 1 0 472.00,512.35 Z" fill="#4ea6f8"/>
<polyline points="464,437.5 467.5,434.5 474,434.5" stroke="#dcdcdc" stroke-width="1" fill="none"/>
<polyline points="497,509.5 509,509.5" stroke="#dcdcdc" stroke-width="1" fill="none"/>
<polyline points="497,512 503,524.5 509,524.5" stroke="#dcdcdc" stroke-width="1" fill="none"/>
<polyline points="327,583 322,590.5 317,590.5" stroke="#dcdcdc" stroke-width="1" fill="none"/>
<circle cx="606" cy="659.3" r="4.2" fill="#4ea6f8"/>
<circle cx="746" cy="659.3" r="4.2" fill="#6cc31f"/>
<circle cx="886" cy="659.3" r="4.2" fill="#f46b6b"/>
<rect x="1022" y="655.2" width="8.5" height="8.5" fill="#cfe6ff"/>
</svg></body></html>
